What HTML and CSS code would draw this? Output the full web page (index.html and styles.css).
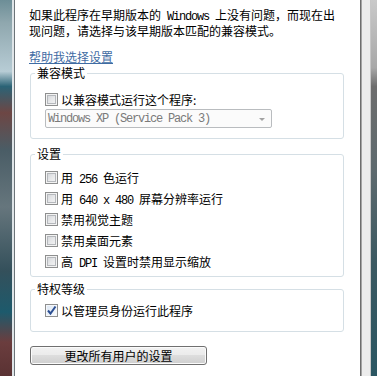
FILE: index.html
```html
<!DOCTYPE html>
<html lang="zh-CN">
<head>
    <meta charset="UTF-8">
    <meta name="viewport" content="width=device-width, initial-scale=1.0">
    <title>兼容性</title>
    <link rel="stylesheet" href="styles.css">
</head>

<body>

    <div class="window">
        <div class="frame-left"></div>

        <div class="pane">
            <p class="intro">如果此程序在早期版本的<span class="en"> Windows </span>上没有问题，而现在出<br>现问题，请选择与该早期版本匹配的兼容模式。</p>

            <a class="help-link" href="#">帮助我选择设置</a>

            <fieldset class="group group-compat">
                <legend>兼容模式</legend>
                <div class="group-body">
                    <label class="check-row short"><span class="box"></span><span class="text">以兼容模式运行这个程序:</span></label>
                    <div class="combo">
                        <span class="en">Windows XP (Service Pack 3)</span>
                        <span class="arrow"></span>
                    </div>
                </div>
            </fieldset>

            <fieldset class="group group-settings">
                <legend>设置</legend>
                <div class="group-body">
                    <label class="check-row"><span class="box"></span><span class="text">用<span class="en"> 256 </span>色运行</span></label>
                    <label class="check-row"><span class="box"></span><span class="text">用<span class="en"> 640 x 480 </span>屏幕分辨率运行</span></label>
                    <label class="check-row"><span class="box"></span><span class="text">禁用视觉主题</span></label>
                    <label class="check-row"><span class="box"></span><span class="text">禁用桌面元素</span></label>
                    <label class="check-row"><span class="box"></span><span class="text">高<span class="en"> DPI </span>设置时禁用显示缩放</span></label>
                </div>
            </fieldset>

            <fieldset class="group group-priv">
                <legend>特权等级</legend>
                <div class="group-body">
                    <label class="check-row">
                        <span class="box checked">
                            <svg width="11" height="11" viewBox="0 0 11 11"><path d="M2 5.5 L4.5 8.5 L9.5 1.5" fill="none" stroke="#2c4f93" stroke-width="2"/></svg>
                        </span>
                        <span class="text">以管理员身份运行此程序</span>
                    </label>
                </div>
            </fieldset>

            <button class="btn" type="button">更改所有用户的设置</button>
        </div>

        <div class="frame-right"></div>
    </div>

</body>
</html>
```

FILE: styles.css
```css
* {
    margin: 0;
    padding: 0;
    box-sizing: border-box;
}

body {
    font-family: "Noto Sans CJK SC", "Liberation Sans", sans-serif;
    font-size: 12px;
    color: #000;
    width: 377px;
    height: 376px;
    overflow: hidden;
}

.window {
    display: flex;
    height: 376px;
}

/* glass frame on the left */
.frame-left {
    width: 15px;
    flex-shrink: 0;
    border-right: 1px solid #6c7479;
    box-shadow: inset -2px 0 0 #dfe5e8;
    background: linear-gradient(to bottom,
        #6d8e97 0%, #8fa7ae 6%, #b7ccd5 19%, #2b6376 23%, #6d4644 30%,
        #4a5d66 40%, #66767d 55%, #34505b 72%, #1d5a6c 83%, #6b3d3e 91%, #5a3233 100%);
}

.pane {
    width: 345px;
    flex-shrink: 0;
    background: #fff;
    padding-top: 8px;
}

.intro {
    padding-left: 14px;
    line-height: 14px;
}

.en {
    font-family: "Liberation Mono", monospace;
    font-size: 12px;
    letter-spacing: -1.2px;
    white-space: pre;
}

.help-link {
    display: block;
    width: max-content;
    margin: 12px 0 0 14px;
    line-height: 14px;
    color: #3f6ca3;
    text-decoration: underline;
}

/* group boxes */
.group {
    min-width: 0;
    margin: 0 16px 0 15px;
    border: 1px solid #d5dfe5;
    border-radius: 3px;
}

.group legend {
    margin-left: 4px;
    padding: 0 2px;
    line-height: 14px;
}

.group-compat {
    margin-top: 2px;
}

.group-compat .group-body {
    padding: 12px 0 10px 14px;
}

.group-settings {
    margin-top: 8px;
}

.group-settings .group-body {
    padding: 6px 0 4px 14px;
}

.group-priv {
    margin-top: 5px;
}

.group-priv .group-body {
    padding: 4px 0 10px 14px;
}

.check-row {
    display: flex;
    align-items: center;
    gap: 3px;
    height: 21px;
}

.check-row.short {
    height: 14px;
}

.box {
    width: 13px;
    height: 13px;
    flex-shrink: 0;
    display: flex;
    align-items: center;
    justify-content: center;
    border: 1px solid #8e8f8f;
    background: linear-gradient(135deg, #cdd0d4 0%, #e6e7e9 50%, #f7f7f7 100%);
    box-shadow: inset 0 0 0 1px #f3f3f3, inset 0 0 0 2px #b5b8bc;
}

.box.checked {
    background: linear-gradient(135deg, #dbe6f4 0%, #eef3f9 60%, #fafcfe 100%);
    box-shadow: inset 0 0 0 1px #f4f7fb;
}

.combo {
    display: flex;
    align-items: center;
    justify-content: space-between;
    width: 227px;
    height: 19px;
    margin-top: 3px;
    padding: 0 6px 0 2px;
    border: 1px solid #b9bcbf;
    border-radius: 2px;
    background: #fbfbfb;
    color: #7a7a7a;
}

.arrow {
    width: 0;
    height: 0;
    border-left: 3px solid transparent;
    border-right: 3px solid transparent;
    border-top: 3px solid #a3a3a3;
    margin-top: 1px;
}

.btn {
    display: block;
    width: 177px;
    height: 19px;
    margin: 14px 0 0 15px;
    border: 1px solid #707070;
    border-radius: 3px;
    font-family: inherit;
    font-size: 12px;
    line-height: 15px;
    color: #000;
    background: linear-gradient(to bottom, #f2f2f2 0%, #ebebeb 45%, #dddddd 50%, #cfcfcf 100%);
    box-shadow: inset 0 0 0 1px #fbfbfb;
}

/* glass frame on the right */
.frame-right {
    width: 17px;
    flex-shrink: 0;
    border-left: 1px solid #6e6e6e;
    display: flex;
}

.frame-right::before {
    content: "";
    width: 8px;
    background: #ececec;
    border-left: 1px solid #a4a4a4;
    border-right: 1px solid #c6c6c6;
}

.frame-right::after {
    content: "";
    flex: 1;
    background: linear-gradient(to bottom,
        #c9c9c9 0%, #a8a8a8 18%, #6d6d6d 23%, #5e6a6e 45%, #3b5961 70%, #2a5662 100%);
}
```
